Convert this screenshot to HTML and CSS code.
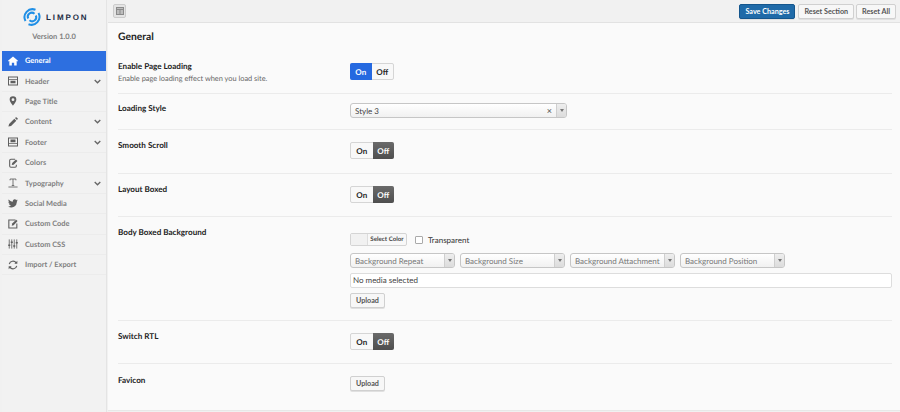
FILE: index.html
```html
<!DOCTYPE html>
<html lang="en">
<head>
<meta charset="utf-8">
<title>Limpon Options</title>
<link rel="stylesheet" href="styles.css">
</head>
<body>
<div class="app">
  <aside class="sidebar">
    <div class="brand">
      <svg class="logo" width="18" height="18" viewBox="0 0 18 18" fill="none" stroke="#1f8fe6" stroke-width="2">
        <path d="M2.500 13A8 8 0 0 1 12.500 1.800"/>
        <path d="M15.500 5A8 8 0 0 1 5.500 16.200"/>
        <path d="M5.200 10.500A4 4 0 0 1 11.500 5.800"/>
        <path d="M12.800 7.500A4 4 0 0 1 6.500 12.200"/>
      </svg>
      <span class="brand-name">LIMPON</span>
    </div>
    <div class="version">Version 1.0.0</div>
    <nav class="menu">
      <a class="item active"><svg class="ico" viewBox="0 0 12 12"><path fill="currentColor" d="M6 .6 0 5.800l.8.9.8-.7V11.500h3V8h2.800v3.500h3V6l.8.7.8-.9z"/></svg><span class="label">General</span></a>
      <a class="item"><svg class="ico" viewBox="0 0 12 12"><path fill="currentColor" fill-rule="evenodd" d="M0 .5h12v11H0zM1.200 1.700v2h9.600v-2zM1.200 4.600v5.700h9.600V4.600zM3 5.600h6v3H3z"/></svg><span class="label">Header</span><svg class="chev" viewBox="0 0 8 5"><path d="M.8.8 4 4l3.200-3.200" fill="none" stroke="currentColor" stroke-width="1.500"/></svg></a>
      <a class="item"><svg class="ico" viewBox="0 0 12 12"><path fill="currentColor" fill-rule="evenodd" d="M6 .3A4 4 0 0 0 2 4.300c0 2.600 4 7.400 4 7.400s4-4.800 4-7.400a4 4 0 0 0-4-4zm0 2.400a1.700 1.700 0 1 1 0 3.400 1.700 1.700 0 0 1 0-3.400z"/></svg><span class="label">Page Title</span></a>
      <a class="item"><svg class="ico" viewBox="0 0 12 12"><path fill="currentColor" d="M.5 11.500l.8-3.200L7.600 2l2.400 2.400-6.300 6.300zM8.300 1.300 9.200.5a.9.9 0 0 1 1.200 0l1.100 1.100a.9.9 0 0 1 0 1.200l-.8.9z"/></svg><span class="label">Content</span><svg class="chev" viewBox="0 0 8 5"><path d="M.8.8 4 4l3.200-3.200" fill="none" stroke="currentColor" stroke-width="1.500"/></svg></a>
      <a class="item"><svg class="ico" viewBox="0 0 12 12"><path fill="currentColor" fill-rule="evenodd" d="M0 .5h12v11H0zM1.200 8.400v1.900h9.600V8.400zM1.200 1.700v5.800h9.600V1.700zM3 3h6v3.400H3z"/></svg><span class="label">Footer</span><svg class="chev" viewBox="0 0 8 5"><path d="M.8.8 4 4l3.200-3.200" fill="none" stroke="currentColor" stroke-width="1.500"/></svg></a>
      <a class="item"><svg class="ico" viewBox="0 0 12 12"><path fill="none" stroke="currentColor" stroke-width="1.300" d="M8.500 1.500H3.500A1.500 1.500 0 0 0 2 3v6.500A1.500 1.500 0 0 0 3.500 11h5A1.500 1.500 0 0 0 10 9.500V8"/><path fill="currentColor" d="M4.500 8.500 5 6 9.500 1.800 11.300 3.600 6.800 8z"/></svg><span class="label">Colors</span></a>
      <a class="item"><svg class="ico" viewBox="0 0 12 12"><path fill="none" stroke="currentColor" stroke-width="1" d="M2.500 2.800V1.200h7v1.600M6 1.200v8M4.500 9h3M.5 10.800h11"/></svg><span class="label">Typography</span><svg class="chev" viewBox="0 0 8 5"><path d="M.8.8 4 4l3.200-3.200" fill="none" stroke="currentColor" stroke-width="1.500"/></svg></a>
      <a class="item"><svg class="ico" viewBox="0 0 12 12"><path fill="currentColor" d="M11.700 2.600c-.4.2-.9.300-1.400.4.500-.3.900-.8 1.100-1.300-.5.300-1 .5-1.500.6A2.400 2.400 0 0 0 5.800 4.500C3.800 4.400 2 3.400.8 1.900c-.6 1.100-.3 2.500.8 3.200-.4 0-.8-.1-1.100-.3 0 1.200.8 2.200 1.900 2.400-.3.100-.7.100-1.100 0 .3 1 1.200 1.700 2.300 1.700A4.800 4.800 0 0 1 .1 10.100 6.800 6.800 0 0 0 10.700 4c.4-.4.800-.8 1-1.400z"/></svg><span class="label">Social Media</span></a>
      <a class="item"><svg class="ico" viewBox="0 0 12 12"><path fill="none" stroke="currentColor" stroke-width="1.300" d="M9 1.200H1v9.600h9.600V5.500"/><path fill="currentColor" d="M4.500 8 5 5.500 9.800.8 11.500 2.500 6.800 7.400z"/></svg><span class="label">Custom Code</span></a>
      <a class="item"><svg class="ico" viewBox="0 0 12 12"><path fill="none" stroke="currentColor" stroke-width="1" d="M1.500.5v11M4.500.5v11M7.500.5v11M10.500.5v11"/><path fill="none" stroke="currentColor" stroke-width="1.800" d="M.3 7.500h2.400M3.300 4h2.400M6.300 8.500h2.400M9.300 4.500h2.400"/></svg><span class="label">Custom CSS</span></a>
      <a class="item"><svg class="ico" viewBox="0 0 12 12"><path fill="none" stroke="currentColor" stroke-width="1.400" d="M1.500 5A4.600 4.600 0 0 1 9.800 3.500M10.500 7A4.600 4.600 0 0 1 2.200 8.500"/><path fill="currentColor" d="M11.200 1v3.600H7.600zM.8 11V7.400h3.600z"/></svg><span class="label">Import / Export</span></a>
    </nav>
  </aside>
  <main class="main">
    <header class="toolbar">
      <span class="layout-btn"><svg width="8" height="8" viewBox="0 0 8 8"><path fill="#8a8a8a" d="M0 0h8v8H0z"/><path fill="#bdbdbd" d="M1 1h6v1H1zM1 3h2.500v4H1zM4.500 3H7v4H4.500z"/></svg></span>
      <div class="actions">
        <button class="btn primary">Save Changes</button>
        <button class="btn">Reset Section</button>
        <button class="btn">Reset All</button>
      </div>
    </header>
    <section class="panel">
      <h1 class="panel-title">General</h1>
      <div class="row row-first">
        <div class="row-label"><strong>Enable Page Loading</strong><small>Enable page loading effect when you load site.</small></div>
        <div class="switch"><span class="on active-on">On</span><span class="off">Off</span></div>
      </div>
      <div class="row row-select">
        <div class="row-label"><strong>Loading Style</strong></div>
        <div class="select wide"><span class="select-text dark">Style 3</span><span class="clear">×</span><span class="select-arrow"></span></div>
      </div>
      <div class="row row-switch">
        <div class="row-label"><strong>Smooth Scroll</strong></div>
        <div class="switch"><span class="on">On</span><span class="off active-off">Off</span></div>
      </div>
      <div class="row row-switch row-short">
        <div class="row-label"><strong>Layout Boxed</strong></div>
        <div class="switch"><span class="on">On</span><span class="off active-off">Off</span></div>
      </div>
      <div class="row row-bg">
        <div class="row-label"><strong>Body Boxed Background</strong></div>
        <div class="bg-fields">
          <div class="color-line">
            <span class="color-btn"><span class="swatch"></span><span class="color-text">Select Color</span></span>
            <label class="check"><span class="box"></span>Transparent</label>
          </div>
          <div class="select-line">
            <div class="select"><span class="select-text">Background Repeat</span><span class="select-arrow"></span></div>
            <div class="select"><span class="select-text">Background Size</span><span class="select-arrow"></span></div>
            <div class="select"><span class="select-text">Background Attachment</span><span class="select-arrow"></span></div>
            <div class="select"><span class="select-text">Background Position</span><span class="select-arrow"></span></div>
          </div>
          <div class="media">No media selected</div>
          <button class="btn upload">Upload</button>
        </div>
      </div>
      <div class="row row-switch row-short">
        <div class="row-label"><strong>Switch RTL</strong></div>
        <div class="switch"><span class="on">On</span><span class="off active-off">Off</span></div>
      </div>
      <div class="row row-last">
        <div class="row-label"><strong>Favicon</strong></div>
        <button class="btn upload">Upload</button>
      </div>
    </section>
  </main>
</div>
</body>
</html>
```
FILE: styles.css
```css
* { box-sizing: border-box; }
html, body { margin: 0; height: 100%; overflow: hidden; }
body { font-family: Lato, "Liberation Sans", sans-serif; font-size: 8px; color: #222; background: #f1f1f1; text-rendering: geometricPrecision; }
.app { display: flex; height: 412px; padding-left: 2px; }
.sidebar { width: 105px; flex: none; background: #f2f2f2; border-right: 1px solid #e4e4e4; }
.brand { height: 29px; padding: 5px 0 0 21px; display: flex; align-items: center; gap: 5px; }
.brand-name { font-weight: 700; font-size: 8px; letter-spacing: 1.9px; color: #1d2c44; font-family: "Liberation Sans", sans-serif; }
.version { height: 22px; text-align: center; padding: 3px 0 0; font-size: 7.500px; font-weight: 700; color: #808080; }
.menu { display: flex; flex-direction: column; }
.item { height: 20.400px; display: flex; align-items: center; padding: 0 3px 0 6px; color: #808080; font-weight: 700; font-size: 7.400px; border-bottom: 1px solid #ececec; }
.item.active { background: #2d6fe0; color: #fff; border-bottom-color: #2d6fe0; }
.ico { width: 10px; height: 10px; flex: none; color: #5f5f5f; margin-right: 7px; }
.active .ico { color: #fff; }
.label { flex: 1; }
.chev { width: 7px; height: 5px; color: #666; margin-right: 2px; }
.main { flex: 1; min-width: 0; background: #fafafa; margin-left: 1px; border-bottom: 1px solid #e8e8e8; height: 411px; }
.toolbar { height: 23px; background: #f1f1f1; border-bottom: 1px solid #e2e2e2; display: flex; align-items: center; justify-content: space-between; padding: 0 4px 0 5px; }
.layout-btn { width: 13px; height: 14px; display: flex; align-items: center; justify-content: center; background: #e4e4e4; border: 1px solid #ccc; border-radius: 2px; }
.actions { display: flex; gap: 2px; }
.btn { font-family: inherit; font-size: 7.200px; font-weight: 700; color: #555; height: 15px; padding: 0 5px; background: #f7f7f7; border: 1px solid #d0d0d0; border-radius: 2px; box-shadow: 0 1px 0 #e0e0e0; }
.btn.primary { background: #1f6aa8; border-color: #14568d; color: #fff; margin-right: 1px; }
.panel { padding: 0 8px 0 10px; }
.panel-title { margin: 0; height: 31px; padding-top: 8px; font-size: 10.300px; line-height: 12px; font-weight: 700; color: #222; }
.row { display: flex; border-bottom: 1px solid #ebebeb; }
.row-label { width: 232px; flex: none; display: flex; flex-direction: column; }
.row-label strong { font-size: 8.100px; font-weight: 700; line-height: 11px; color: #222; }
.row-label small { font-size: 7.400px; color: #666; line-height: 11px; margin-top: 1px; }
.row-first { height: 40px; padding-top: 7px; }
.row-select { height: 36px; padding-top: 9px; }
.row-switch { height: 44px; padding-top: 10px; }
.row-short { height: 43px; }
.row-bg { height: 104px; padding-top: 10px; }
.row-last { height: 46px; padding-top: 10px; border-bottom: 0; }
.row-last .row-label { padding-top: 1px; }
.switch { display: flex; height: 17px; width: 44px; margin-top: 2px; border: 1px solid #d5d5d5; border-radius: 2px; background: #f8f8f8; font-weight: 700; font-size: 8px; color: #222; }
.switch span { flex: 1; display: flex; align-items: center; justify-content: center; }
.active-on { background: #2569e0; color: #fff; margin: -1px 0 -1px -1px; border-radius: 2px 0 0 2px; }
.active-off { background: linear-gradient(#6a6a6a, #4e4e4e); color: #fff; margin: -1px -1px -1px 0; border-radius: 0 2px 2px 0; }
.select { display: flex; align-items: center; height: 15px; width: 105px; background: linear-gradient(#fff, #f1f1f1); border: 1px solid #c6c6c6; border-radius: 3px; font-size: 8px; color: #777; padding-left: 4px; }
.select.wide { width: 217px; }
.select-text { flex: 1; white-space: nowrap; overflow: hidden; }
.select-text.dark { color: #444; }
.clear { color: #555; font-size: 9px; margin-right: 4px; }
.select-arrow { width: 10px; align-self: stretch; background: linear-gradient(#eee, #dcdcdc); border-left: 1px solid #cfcfcf; display: flex; align-items: center; justify-content: center; border-radius: 0 2px 2px 0; }
.select-arrow::after { content: ""; border: 2px solid transparent; border-top: 3px solid #777; border-bottom: 0; }
.bg-fields { flex: 1; display: flex; flex-direction: column; align-items: flex-start; }
.color-line { display: flex; align-items: center; height: 14px; margin-top: 5px; gap: 8px; }
.color-btn { display: flex; width: 57px; height: 13px; border: 1px solid #d4d4d4; border-radius: 2px; background: #f8f8f8; font-size: 6.200px; font-weight: 700; color: #444; }
.swatch { width: 17px; background: #f1f1f1; border-right: 1px solid #ddd; }
.color-text { flex: 1; text-align: center; line-height: 11px; }
.check { display: flex; align-items: center; font-size: 8px; color: #333; margin-top: 2px; }
.box { width: 8px; height: 8px; border: 1px solid #aaa; border-radius: 1px; background: #fff; margin-right: 5px; }
.select-line { display: flex; gap: 5px; margin-top: 7px; }
.media { width: 100%; height: 15px; margin-top: 5px; background: #fff; border: 1px solid #ddd; border-radius: 2px; padding-left: 2px; line-height: 13px; color: #444; }
.upload { margin-top: 5px; }
.row-last .upload { margin-top: 2px; }
```
